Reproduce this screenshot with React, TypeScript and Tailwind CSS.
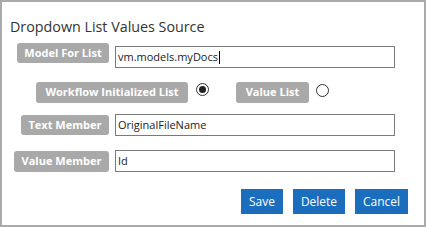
import React from "react";

const font = { fontFamily: '"Open Sans", "Liberation Sans", sans-serif' };

function Label({ children, w, h = 20 }: { children: React.ReactNode; w: string; h?: number }) {
  return (
    <span
      className={`flex items-center justify-center rounded-[3px] bg-[#a9a9a9] text-[11px] font-bold text-white ${w} ${
        h === 21 ? "h-[21px]" : "h-[20px]"
      }`}
    >
      {children}
    </span>
  );
}

function Field({ value, caret }: { value: string; caret?: boolean }) {
  return (
    <div className="flex h-[22px] w-[280px] items-center border border-[#7a7a7a] bg-white px-[2px] text-[11px] text-[#222]">
      {value}
      {caret && <span className="ml-[1px] inline-block h-[13px] w-px bg-black" />}
    </div>
  );
}

function Radio({ checked }: { checked?: boolean }) {
  return (
    <span className="flex h-[13px] w-[13px] items-center justify-center rounded-full border border-[#333] bg-white">
      {checked && <span className="h-[7px] w-[7px] rounded-full bg-[#222]" />}
    </span>
  );
}

export default function App() {
  return (
    <div
      style={font}
      className="flex h-[227px] w-[426px] flex-col border-2 border-[#aaaaaa] bg-white text-[#333]"
    >
      <h1 className="ml-[8px] mt-[15px] text-[14.3px] leading-[20px] text-[#333]">
        Dropdown List Values Source
      </h1>

      <div className="mt-[6px] flex items-start gap-[6px]">
        <div className="flex w-[107px] justify-end">
          <Label w="w-[92px]">Model For List</Label>
        </div>
        <div className="mt-[3px]">
          <Field value="vm.models.myDocs" caret />
        </div>
      </div>

      <div className="mt-[14px] flex items-center">
        <div className="ml-[34px] flex">
          <Label w="w-[152px]" h={21}>
            Workflow Initialized List
          </Label>
        </div>
        <div className="ml-[8px] -mt-[7px] flex">
          <Radio checked />
        </div>
        <div className="ml-[27px] flex">
          <Label w="w-[73px]" h={21}>
            Value List
          </Label>
        </div>
        <div className="ml-[7px] -mt-[5px] flex">
          <Radio />
        </div>
      </div>

      <div className="mt-[11px] flex items-center gap-[6px]">
        <div className="flex w-[107px] justify-end">
          <Label w="w-[88px]">Text Member</Label>
        </div>
        <Field value="OriginalFileName" />
      </div>

      <div className="mt-[14px] flex items-center gap-[6px]">
        <div className="flex w-[107px] justify-end">
          <Label w="w-[95px]" h={21}>
            Value Member
          </Label>
        </div>
        <Field value="Id" />
      </div>

      <div className="mr-[16px] mt-[17px] flex justify-end gap-[10px]">
        <button className="h-[25px] w-[42px] bg-[#1a6ebd] text-[12px] text-white">Save</button>
        <button className="h-[25px] w-[52px] bg-[#1a6ebd] text-[12px] text-white">Delete</button>
        <button className="h-[25px] w-[53px] bg-[#1a6ebd] text-[12px] text-white">Cancel</button>
      </div>
    </div>
  );
}
